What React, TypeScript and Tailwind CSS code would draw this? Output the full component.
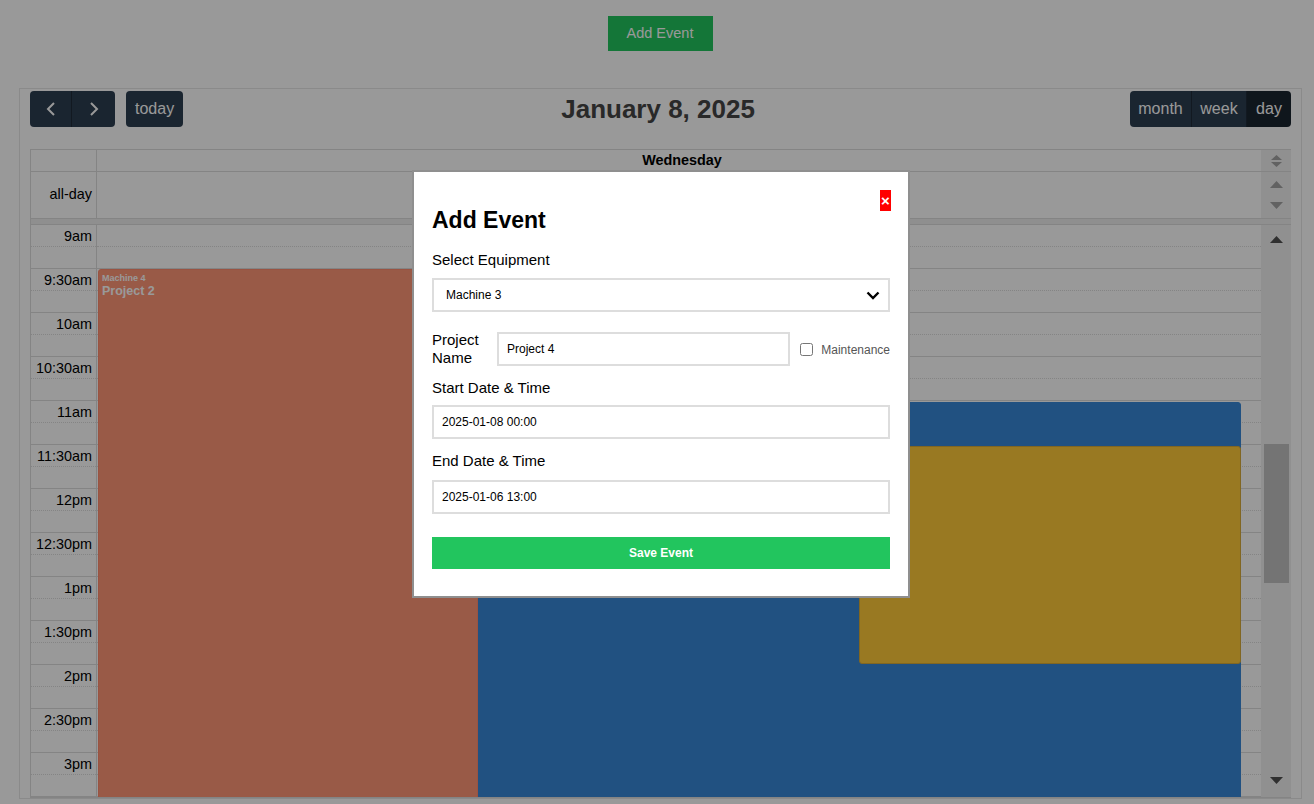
import React from "react"

const slots = [
  "9am", "9:30am", "10am", "10:30am", "11am", "11:30am", "12pm",
  "12:30pm", "1pm", "1:30pm", "2pm", "2:30pm", "3pm",
]

const Tri = ({ dir, color, w = 12, h = 7 }: { dir: "up" | "down"; color: string; w?: number; h?: number }) => (
  <svg width={w} height={h} viewBox={`0 0 ${w} ${h}`} className="block">
    {dir === "up" ? (
      <polygon points={`0,${h} ${w / 2},0 ${w},${h}`} fill={color} />
    ) : (
      <polygon points={`0,0 ${w},0 ${w / 2},${h}`} fill={color} />
    )}
  </svg>
)

const Chevron = ({ left }: { left?: boolean }) => (
  <svg width="10" height="14" viewBox="0 0 10 14" className="block">
    <path
      d={left ? "M8 1 L2 7 L8 13" : "M2 1 L8 7 L2 13"}
      fill="none"
      stroke="white"
      strokeWidth="2"
    />
  </svg>
)

const Toolbar = () => (
  <div className="mt-px mb-[22px] flex h-[36px] items-center justify-between">
    <div className="flex h-full items-center">
      <div className="flex h-full overflow-hidden rounded-[4px]">
        <button className="flex w-[42px] items-center justify-center border-r border-[#1e2b37] bg-[#2c3e50]">
          <Chevron left />
        </button>
        <button className="flex w-[43px] items-center justify-center bg-[#2c3e50]">
          <Chevron />
        </button>
      </div>
      <button className="ml-[11px] h-full rounded-[4px] bg-[#2c3e50] px-[9px] text-[16px] text-white">today</button>
    </div>
    <h2 className="pl-[3px] text-[26px] font-bold text-[#454545]">January 8, 2025</h2>
    <div className="flex h-full overflow-hidden rounded-[4px]">
      <button className="w-[62px] border-r border-[#1e2b37] bg-[#2c3e50] text-[16px] text-white">month</button>
      <button className="w-[55px] border-r border-[#1e2b37] bg-[#2c3e50] text-[16px] text-white">week</button>
      <button className="w-[44px] bg-[#1a252f] text-[16px] text-white">day</button>
    </div>
  </div>
)

const Event = ({
  pos, bg, border, title, sub,
}: { pos: string; bg: string; border: string; title?: string; sub?: string }) => (
  <div className={`absolute rounded-[3px] border px-[3px] pt-[2px] text-white ${pos} ${bg} ${border}`}>
    {title && <div className="text-[9px] font-bold leading-[12px]">{title}</div>}
    {sub && <div className="text-[12.5px] font-bold leading-[14px]">{sub}</div>}
  </div>
)

const Calendar = () => (
  <div className="ml-[19px] mr-[12px] mt-[37px] border border-[#e6e6e6] px-[10px] pt-px">
    <Toolbar />
    <div className="border-l border-t border-[#ddd]">
      {/* header */}
      <div className="flex h-[22px] border-b border-[#ddd]">
        <div className="w-[65px]" />
        <div className="flex flex-1 items-center justify-center border-l border-[#ddd] pl-[6px] text-[14.4px] font-bold text-black">
          Wednesday
        </div>
        <div className="flex w-[30px] flex-col items-center justify-center gap-[2px] bg-[#f1f1f1]">
          <Tri dir="up" color="#a3a3a3" w={11} h={5} />
          <Tri dir="down" color="#a3a3a3" w={11} h={5} />
        </div>
      </div>
      {/* all-day */}
      <div className="flex h-[47px] border-b border-[#ddd]">
        <div className="flex w-[65px] items-center justify-end pr-[4px] text-[14.4px] text-black">all-day</div>
        <div className="flex-1 border-l border-[#ddd]" />
        <div className="flex w-[30px] flex-col items-center justify-between bg-[#f1f1f1] py-[9px]">
          <Tri dir="up" color="#a3a3a3" w={13} h={7} />
          <Tri dir="down" color="#a3a3a3" w={13} h={7} />
        </div>
      </div>
      <div className="h-[6px] border-b border-[#ddd] bg-[#eee]" />
      {/* body */}
      <div className="flex h-[573px] overflow-hidden border-b border-[#ddd]">
        <div className="w-[65px]">
          {slots.map((s) => (
            <div key={s}>
              <div className="h-[22px] border-b border-dotted border-[#ddd] pr-[4px] text-right text-[14.4px] leading-[22px] text-black">
                {s}
              </div>
              <div className="h-[22px] border-b border-[#ddd]" />
            </div>
          ))}
        </div>
        <div className="relative flex-1 border-l border-[#ddd]">
          {slots.map((s) => (
            <div key={s}>
              <div className="h-[22px] border-b border-dotted border-[#ddd]" />
              <div className="h-[22px] border-b border-[#ddd]" />
            </div>
          ))}
          <Event
            pos="left-[1px] top-[44px] w-[380px] h-[620px]"
            bg="bg-[#ff9677]"
            border="border-[#ff8a6e]"
            title="Machine 4"
            sub="Project 2"
          />
          <Event
            pos="left-[381px] top-[177px] w-[763px] h-[500px]"
            bg="bg-[#3788d8]"
            border="border-[#3788d8]"
          />
          <Event
            pos="left-[762px] top-[221px] w-[382px] h-[218px]"
            bg="bg-[#ffca3a]"
            border="border-[#d8aa3a]"
          />
        </div>
        <div className="relative flex w-[30px] flex-col items-center bg-[#f1f1f1]">
          <div className="mt-[11px]">
            <Tri dir="up" color="#505050" w={13} h={7} />
          </div>
          <div className="mt-[201px] h-[139px] w-[25px] bg-[#c1c1c1]" />
          <div className="mt-auto mb-[13px]">
            <Tri dir="down" color="#505050" w={13} h={7} />
          </div>
        </div>
      </div>
    </div>
  </div>
)

const Field = ({ value, className = "" }: { value: string; className?: string }) => (
  <div className={`flex h-[34px] items-center border-2 border-[#ddd] pl-[8px] text-[12px] text-black ${className}`}>
    {value}
  </div>
)

const Modal = () => (
  <div className="absolute left-[412px] top-[170px] h-[428px] w-[498px] border-2 border-[#8f8f8f] bg-white px-[18px] pt-[35px]">
    <button className="absolute right-[17px] top-[18px] flex h-[21px] w-[11px] items-center justify-center bg-[#ff0000] text-[15px] font-bold leading-none text-white">
      ×
    </button>
    <h2 className="text-[23px] font-bold leading-[26px] text-black">Add Event</h2>
    <div className="mt-[18px] text-[15px] leading-[18px] text-black">Select Equipment</div>
    <div className="mt-[9px] flex h-[34px] items-center justify-between border-2 border-[#ddd] pl-[12px] pr-[8px] text-[12px] text-black">
      <span>Machine 3</span>
      <svg width="14" height="9" viewBox="0 0 14 9" className="block">
        <path d="M1.5 1.5 L7 7 L12.5 1.5" fill="none" stroke="black" strokeWidth="2.4" />
      </svg>
    </div>
    <div className="mt-[19px] flex items-center">
      <div className="w-[47px] text-[15px] leading-[18px] text-black">Project Name</div>
      <Field value="Project 4" className="ml-[18px] flex-1" />
      <input type="checkbox" className="m-0 ml-[10px] h-[13px] w-[13px]" />
      <span className="ml-[8px] mt-[2px] text-[12px] text-[#555]">Maintenance</span>
    </div>
    <div className="mt-[12px] text-[15px] leading-[18px] text-black">Start Date &amp; Time</div>
    <Field value="2025-01-08 00:00" className="mt-[8px]" />
    <div className="mt-[13px] text-[15px] leading-[18px] text-black">End Date &amp; Time</div>
    <Field value="2025-01-06 13:00" className="mt-[10px]" />
    <button className="mt-[23px] h-[32px] w-full bg-[#22c55e] text-[12px] font-bold text-white">Save Event</button>
  </div>
)

export default function App() {
  return (
    <div className="relative h-[804px] w-full overflow-hidden bg-white font-['Liberation_Sans',Arial,sans-serif]">
      <div className="flex justify-center pl-[6px] pt-4">
        <button className="h-[35px] w-[105px] bg-[#22c55e] text-[14.5px] text-white">Add Event</button>
      </div>
      <Calendar />
      <div className="absolute inset-0 bg-black/40" />
      <Modal />
    </div>
  )
}
